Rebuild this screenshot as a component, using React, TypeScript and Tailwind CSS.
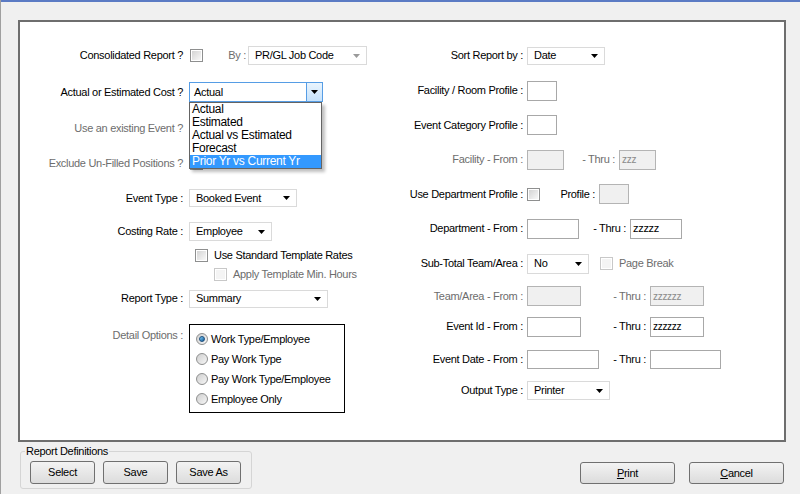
import React from 'react';

const GRAY = 'text-[#6d6d6d]';

function Arrow({ gray }: { gray?: boolean }) {
  return (
    <svg width="7" height="4" viewBox="0 0 7 4" className="shrink-0">
      <path d="M0 0h7L3.5 4z" fill={gray ? '#9a9a9a' : '#000'} />
    </svg>
  );
}

function Combo({ className, text, disabled }: { className: string; text: string; disabled?: boolean }) {
  return (
    <div
      className={`flex items-center justify-between bg-white border border-[#dadada] pl-[6px] pr-[6px] shrink-0 whitespace-nowrap ${className}`}
    >
      <span>{text}</span>
      <Arrow gray={disabled} />
    </div>
  );
}

function TextBox({ className, value, disabled }: { className: string; value?: string; disabled?: boolean }) {
  return (
    <div
      className={`flex items-center border shrink-0 pl-[2px] text-[10px] ${
        disabled ? 'bg-[#f0f0f0] border-[#b4b4b4] text-[#8a8a8a]' : 'bg-white border-[#a8a8a8] text-black'
      } ${className}`}
    >
      {value}
    </div>
  );
}

function Checkbox({ disabled }: { disabled?: boolean }) {
  return (
    <div
      className={`w-[13px] h-[13px] border shrink-0 p-[1px] ${disabled ? 'border-[#c8c8c8]' : 'border-[#8e8f8f]'}`}
    >
      <div
        className={`w-full h-full ${
          disabled ? 'bg-[#f4f4f4]' : 'bg-gradient-to-br from-[#d4d4d4] to-[#f8f8f8]'
        }`}
      />
    </div>
  );
}

function Radio({ checked }: { checked?: boolean }) {
  return (
    <div className="w-[12px] h-[12px] rounded-full border border-[#8e8f8f] bg-gradient-to-br from-[#cfcfcf] to-[#f6f6f6] flex items-center justify-center shrink-0">
      {checked && (
        <div className="w-[6px] h-[6px] rounded-full bg-gradient-to-br from-[#7fd0fa] to-[#0b5a98] border border-[#1c4e7c]" />
      )}
    </div>
  );
}

function LLabel({ children, gray }: { children: React.ReactNode; gray?: boolean }) {
  return <div className={`w-[163px] text-right shrink-0 whitespace-nowrap ${gray ? GRAY : ''}`}>{children}</div>;
}

function RLabel({ children, gray }: { children: React.ReactNode; gray?: boolean }) {
  return <div className={`w-[143px] text-right shrink-0 whitespace-nowrap ${gray ? GRAY : ''}`}>{children}</div>;
}

function Btn({ className, children }: { className: string; children: React.ReactNode }) {
  return (
    <div
      className={`flex items-center justify-center border border-[#707070] rounded-[3px] bg-gradient-to-b from-[#f3f3f3] to-[#dcdcdc] ${className}`}
    >
      {children}
    </div>
  );
}

const costOptions = ['Actual', 'Estimated', 'Actual vs Estimated', 'Forecast', 'Prior Yr vs Current Yr'];

export default function App() {
  return (
    <div className="w-[800px] h-[494px] bg-[#f0f0f0] overflow-hidden border-l border-[#a0a0a0] text-[11px] leading-[13px] tracking-[-0.3px] text-black font-['Liberation_Sans',Arial,sans-serif]">
      <div className="h-[2px] bg-[#5b7bc4]" />

      <div className="ml-[17px] mt-[18px] w-[768px] h-[422px] border-2 border-[#6e6e6e] bg-white flex">
        {/* left column */}
        <div className="w-[360px] shrink-0 pt-[16px]">
          <div className="h-[35px] flex items-center">
            <LLabel>Consolidated Report ?</LLabel>
            <div className="ml-[7px]">
              <Checkbox />
            </div>
            <div className={`w-[43px] text-right ${GRAY}`}>By :</div>
            <Combo className="ml-[2px] w-[119px] h-[19px]" text="PR/GL Job Code" disabled />
          </div>

          <div className="h-[38px] flex items-center">
            <LLabel>Actual or Estimated Cost ?</LLabel>
            <div className="ml-[6px] relative">
              <div className="w-[134px] h-[20px] flex items-center justify-between bg-white border border-[#569de5] pl-[4px]">
                <span>Actual</span>
                <div className="w-[16px] h-full bg-gradient-to-b from-[#e9f4fd] to-[#c6e2fb] border-l border-[#569de5] flex items-center justify-center">
                  <Arrow />
                </div>
              </div>
              <div className="absolute left-0 top-full w-[133px] bg-white border border-[#646464] z-10 shadow-[3px_3px_3px_rgba(0,0,0,0.25)]">
                {costOptions.map((o, i) => (
                  <div
                    key={o}
                    className={`h-[13px] pl-[2px] text-[12px] leading-[13px] whitespace-nowrap ${
                      i === 4 ? 'bg-[#3399ff] text-white' : ''
                    }`}
                  >
                    {o}
                  </div>
                ))}
              </div>
            </div>
          </div>

          <div className="h-[35px] flex items-center">
            <LLabel gray>Use an existing Event ?</LLabel>
            <div className="ml-[7px]">
              <Checkbox />
            </div>
          </div>

          <div className="h-[35px] flex items-center">
            <LLabel gray>Exclude Un-Filled Positions ?</LLabel>
            <div className="ml-[7px]">
              <Checkbox />
            </div>
          </div>

          <div className="h-[34px] flex items-center">
            <LLabel>Event Type :</LLabel>
            <Combo className="ml-[6px] w-[108px] h-[18px]" text="Booked Event" />
          </div>

          <div className="h-[33px] flex items-center">
            <LLabel>Costing Rate :</LLabel>
            <Combo className="ml-[6px] w-[83px] h-[19px]" text="Employee" />
          </div>

          <div className="h-[14px] flex items-center pl-[175px]">
            <Checkbox />
            <span className="ml-[6px] whitespace-nowrap">Use Standard Template Rates</span>
          </div>

          <div className="h-[24px] flex items-center pl-[194px]">
            <Checkbox disabled />
            <span className={`ml-[6px] whitespace-nowrap ${GRAY}`}>Apply Template Min. Hours</span>
          </div>

          <div className="h-[25px] flex items-center">
            <LLabel>Report Type :</LLabel>
            <Combo className="ml-[6px] w-[139px] h-[18px]" text="Summary" />
          </div>

          <div className="mt-[13px] flex items-start">
            <div className="pt-[5px]">
              <LLabel gray>Detail Options :</LLabel>
            </div>
            <div className="ml-[6px] w-[156px] h-[89px] border border-black pl-[6px] pt-[4px] flex flex-col">
              {['Work Type/Employee', 'Pay Work Type', 'Pay Work Type/Employee', 'Employee Only'].map((t, i) => (
                <div key={t} className="h-[20px] flex items-center">
                  <Radio checked={i === 0} />
                  <span className="ml-[3px] whitespace-nowrap">{t}</span>
                </div>
              ))}
            </div>
          </div>
        </div>

        {/* right column */}
        <div className="flex-1 pt-[16px]">
          <div className="h-[35px] flex items-center">
            <RLabel>Sort Report by :</RLabel>
            <Combo className="ml-[4px] w-[78px] h-[18px]" text="Date" />
          </div>

          <div className="h-[35px] flex items-center">
            <RLabel>Facility / Room Profile :</RLabel>
            <TextBox className="ml-[4px] w-[30px] h-[20px]" />
          </div>

          <div className="h-[34px] flex items-center">
            <RLabel>Event Category Profile :</RLabel>
            <TextBox className="ml-[4px] w-[30px] h-[20px]" />
          </div>

          <div className="h-[35px] flex items-center">
            <RLabel gray>Facility - From :</RLabel>
            <TextBox className="ml-[4px] w-[37px] h-[20px]" disabled />
            <div className={`w-[51px] text-right ${GRAY}`}>- Thru :</div>
            <TextBox className="ml-[4px] w-[37px] h-[20px]" value="zzz" disabled />
          </div>

          <div className="h-[34px] flex items-center">
            <RLabel>Use Department Profile :</RLabel>
            <div className="ml-[4px]">
              <Checkbox />
            </div>
            <div className="w-[55px] text-right">Profile :</div>
            <TextBox className="ml-[4px] w-[30px] h-[20px]" disabled />
          </div>

          <div className="h-[35px] flex items-center">
            <RLabel>Department - From :</RLabel>
            <TextBox className="ml-[4px] w-[52px] h-[20px]" />
            <div className="w-[47px] text-right">- Thru :</div>
            <TextBox className="ml-[4px] w-[52px] h-[20px] text-[11px]" value="zzzzz" />
          </div>

          <div className="h-[35px] flex items-center">
            <RLabel>Sub-Total Team/Area :</RLabel>
            <Combo className="ml-[4px] w-[62px] h-[20px]" text="No" />
            <div className="ml-[11px]">
              <Checkbox disabled />
            </div>
            <span className={`ml-[6px] whitespace-nowrap ${GRAY}`}>Page Break</span>
          </div>

          <div className="h-[30px] flex items-center">
            <RLabel gray>Team/Area - From :</RLabel>
            <TextBox className="ml-[4px] w-[54px] h-[20px]" disabled />
            <div className={`w-[65px] text-right ${GRAY}`}>- Thru :</div>
            <TextBox className="ml-[4px] w-[54px] h-[20px]" value="zzzzzz" disabled />
          </div>

          <div className="h-[31px] flex items-center">
            <RLabel>Event Id - From :</RLabel>
            <TextBox className="ml-[4px] w-[54px] h-[20px]" />
            <div className="w-[65px] text-right">- Thru :</div>
            <TextBox className="ml-[4px] w-[54px] h-[20px]" value="zzzzzz" />
          </div>

          <div className="h-[34px] flex items-center">
            <RLabel>Event Date - From :</RLabel>
            <TextBox className="ml-[4px] w-[72px] h-[19px]" />
            <div className="w-[47px] text-right">- Thru :</div>
            <TextBox className="ml-[4px] w-[71px] h-[19px]" />
          </div>

          <div className="h-[29px] flex items-center">
            <RLabel>Output Type :</RLabel>
            <Combo className="ml-[4px] w-[83px] h-[19px]" text="Printer" />
          </div>
        </div>
      </div>

      {/* bottom bar */}
      <div className="flex items-start justify-between pl-[19px] pr-[16px]">
        <div className="relative mt-[9px] w-[232px] h-[38px] border border-[#d5d5d5] rounded-[3px] pl-[9px] pt-[9px] flex gap-[8px]">
          <div className="absolute -top-[7px] left-[4px] bg-[#f0f0f0] px-[1px] whitespace-nowrap">Report Definitions</div>
          <Btn className="w-[65px] h-[23px]">Select</Btn>
          <Btn className="w-[65px] h-[23px]">Save</Btn>
          <Btn className="w-[65px] h-[23px]">Save As</Btn>
        </div>
        <div className="mt-[20px] flex gap-[14px]">
          <Btn className="w-[95px] h-[22px]">
            <span>
              <span className="underline">P</span>rint
            </span>
          </Btn>
          <Btn className="w-[95px] h-[22px]">
            <span>
              <span className="underline">C</span>ancel
            </span>
          </Btn>
        </div>
      </div>
    </div>
  );
}
